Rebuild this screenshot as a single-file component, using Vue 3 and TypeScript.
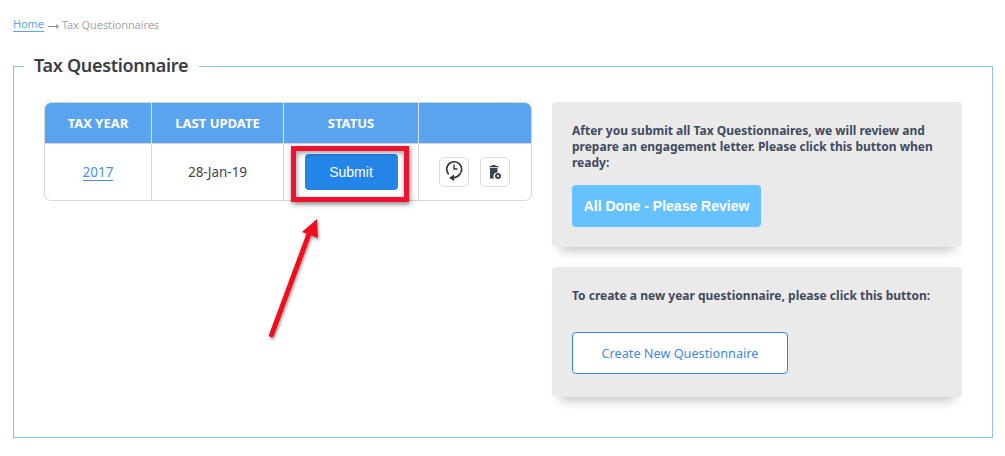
<template>
  <div class="page">
    <div class="crumbs">
      <a class="crumb_link">Home</a>
      <svg class="crumb_arrow" width="11" height="5" viewBox="0 0 11 5" fill="none" stroke="#8a8a8a" stroke-width="1">
        <path d="M0 2.500H10M8 0.500L10.500 2.500L8 4.500" />
      </svg>
      <span>Tax Questionnaires</span>
    </div>
    <fieldset class="box">
      <legend class="box_title">Tax Questionnaire</legend>
      <div class="box_inner">
        <div class="table_wrap">
          <table class="tax_table">
            <thead>
              <tr>
                <th v-for="head in heads" :key="head">{{ head }}</th>
              </tr>
            </thead>
            <tbody>
              <tr v-for="row in rows" :key="row.year">
                <td><a class="year_link">{{ row.year }}</a></td>
                <td>{{ row.updated }}</td>
                <td><button class="submit_btn">Submit</button></td>
                <td>
                  <div class="actions">
                    <button class="icon_btn">
                      <svg width="24" height="24" viewBox="0 0 24 24" fill="none" stroke="#2f3542" stroke-width="1.700">
                        <path d="M6.200 13.800A7.500 7.500 0 1 1 17.500 14.500C16.300 16.300 14 17.500 11 17.800" stroke-linecap="round" />
                        <path d="M12 4.500V9H15.500" stroke-width="1.400" />
                        <path d="M12 14.500L7 18L12 21Z" fill="#2f3542" stroke="none" />
                      </svg>
                    </button>
                    <button class="icon_btn">
                      <svg width="18" height="20" viewBox="0 0 18 20">
                        <path d="M6 3H9.500V4H12.500V5.200H3.500V4H6Z" fill="#3a4250" />
                        <path d="M4 6H11.500V10.500A3.500 3.500 0 0 0 8.500 16.500H4Z" fill="#3a4250" />
                        <circle cx="12" cy="14" r="3" fill="#3a4250" />
                        <circle cx="12" cy="14" r="1.100" fill="#fff" />
                      </svg>
                    </button>
                  </div>
                </td>
              </tr>
            </tbody>
          </table>
          <div class="highlight" />
          <svg class="pointer" width="70" height="135" viewBox="0 0 70 135">
            <defs>
              <filter id="arrow_shadow" x="-30%" y="-20%" width="160%" height="140%">
                <feDropShadow dx="1" dy="2" stdDeviation="1.500" flood-color="#000" flood-opacity="0.4" />
              </filter>
            </defs>
            <g filter="url(#arrow_shadow)">
              <path d="M12.500 127L50 26" stroke="#f0101e" stroke-width="5" stroke-linecap="round" />
              <path d="M58 11L59 30L43 24Z" fill="#f0101e" />
            </g>
          </svg>
        </div>
        <div class="side">
          <div class="panel panel_first">
            <p class="panel_text">After you submit all Tax Questionnaires, we will review and prepare an engagement letter. Please click this button when ready:</p>
            <button class="done_btn">All Done - Please Review</button>
          </div>
          <div class="panel panel_second">
            <p class="panel_text">To create a new year questionnaire, please click this button:</p>
            <button class="create_btn">Create New Questionnaire</button>
          </div>
        </div>
      </div>
    </fieldset>
  </div>
</template>

<script setup lang="ts">
const heads = ['TAX YEAR', 'LAST UPDATE', 'STATUS', '']
const rows = [{ year: '2017', updated: '28-Jan-19' }]
</script>

<style scoped>
.page {
  width: 1005px;
  height: 456px;
  overflow: hidden;
  box-sizing: border-box;
  padding: 16px 12px 0 13px;
  font-family: "Noto Sans", "Open Sans", sans-serif;
  color: #3d4350;
}
.crumbs {
  display: flex;
  align-items: center;
  height: 17px;
  font-size: 11px;
  letter-spacing: -0.1px;
  color: #a8a8a8;
}
.crumb_link {
  color: #5ea3ee;
  border-bottom: 1px solid #5ea3ee;
  line-height: 14px;
}
.crumb_arrow {
  margin: 4px 3px 0 4px;
}
.box {
  width: 980px;
  height: 385px;
  box-sizing: border-box;
  margin: 20px 0 0;
  padding: 0 30px;
  border: 1px solid #8cc3f2;
  min-width: 0;
}
.box_title {
  margin-left: -20px;
  padding: 0 11px 2px 10px;
  font-size: 18px;
  font-weight: 600;
  line-height: 24px;
  letter-spacing: -0.3px;
  color: #3b3d44;
}
.box_inner {
  display: flex;
  gap: 20px;
  margin-top: 23px;
}
.table_wrap {
  position: relative;
  width: 488px;
  height: 100px;
  flex: none;
}
.tax_table {
  width: 488px;
  border-collapse: separate;
  border-spacing: 0;
  table-layout: fixed;
  border: 1px solid #d6d6d6;
  border-radius: 7px;
  overflow: hidden;
}
.tax_table th {
  height: 40px;
  padding: 0;
  background: #5aa3ee;
  color: #fff;
  font-size: 13px;
  font-weight: 700;
  border-right: 1px solid #d6e6f5;
  border-bottom: 1px solid #d6d6d6;
}
.tax_table th:nth-child(1),
.tax_table td:nth-child(1) {
  width: 106px;
}
.tax_table th:nth-child(2),
.tax_table td:nth-child(2) {
  width: 131px;
}
.tax_table th:nth-child(3),
.tax_table td:nth-child(3) {
  width: 134px;
}
.tax_table th:last-child,
.tax_table td:last-child {
  border-right: none;
}
.tax_table td {
  height: 56px;
  padding: 0;
  text-align: center;
  font-size: 13.500px;
  color: #444;
  border-right: 1px solid #d6d6d6;
}
.year_link {
  color: #4a90e2;
  border-bottom: 1px solid #4a90e2;
  line-height: 16px;
  display: inline-block;
}
.submit_btn {
  display: block;
  width: 93px;
  height: 36px;
  margin: 0 auto;
  border: none;
  border-radius: 4px;
  background: #2584e8;
  color: #fff;
  font-family: "Liberation Sans", Arial, sans-serif;
  font-size: 14px;
}
.actions {
  display: flex;
  justify-content: center;
  gap: 11px;
  padding-right: 1px;
}
.icon_btn {
  display: flex;
  align-items: center;
  justify-content: center;
  width: 30px;
  height: 30px;
  padding: 0;
  background: #fff;
  border: 1px solid #dcdcdc;
  border-radius: 5px;
}
.highlight {
  position: absolute;
  left: 247px;
  top: 44px;
  width: 118px;
  height: 56px;
  box-sizing: border-box;
  border: 5px solid #ec1230;
  box-shadow: 1px 2px 5px rgba(0, 0, 0, 0.5), inset 1px 2px 5px rgba(0, 0, 0, 0.4);
}
.pointer {
  position: absolute;
  left: 215px;
  top: 106px;
}
.side {
  display: flex;
  flex-direction: column;
  gap: 20px;
  width: 410px;
}
.panel {
  box-sizing: border-box;
  padding: 21px 20px 0;
  background: #eaeaea;
  border-radius: 4px;
  box-shadow: 0 12px 10px -8px rgba(0, 0, 0, 0.22);
}
.panel_first {
  height: 145px;
}
.panel_second {
  height: 130px;
}
.panel_text {
  margin: 0;
  font-size: 12px;
  font-weight: 700;
  line-height: 16px;
  color: #3f4a5f;
}
.done_btn {
  display: block;
  width: 189px;
  height: 42px;
  margin-top: 14px;
  border: none;
  border-radius: 4px;
  background: #66c2ff;
  color: #fff;
  font-family: "Liberation Sans", Arial, sans-serif;
  font-size: 14px;
  font-weight: 700;
}
.create_btn {
  display: block;
  width: 216px;
  height: 42px;
  margin-top: 28px;
  background: #fff;
  border: 1px solid #2d87e8;
  border-radius: 4px;
  color: #3f88e6;
  font-family: "Noto Sans", sans-serif;
  font-size: 12.700px;
}
</style>

<style>
html,
body {
  margin: 0;
  background: #fff;
}
</style>
